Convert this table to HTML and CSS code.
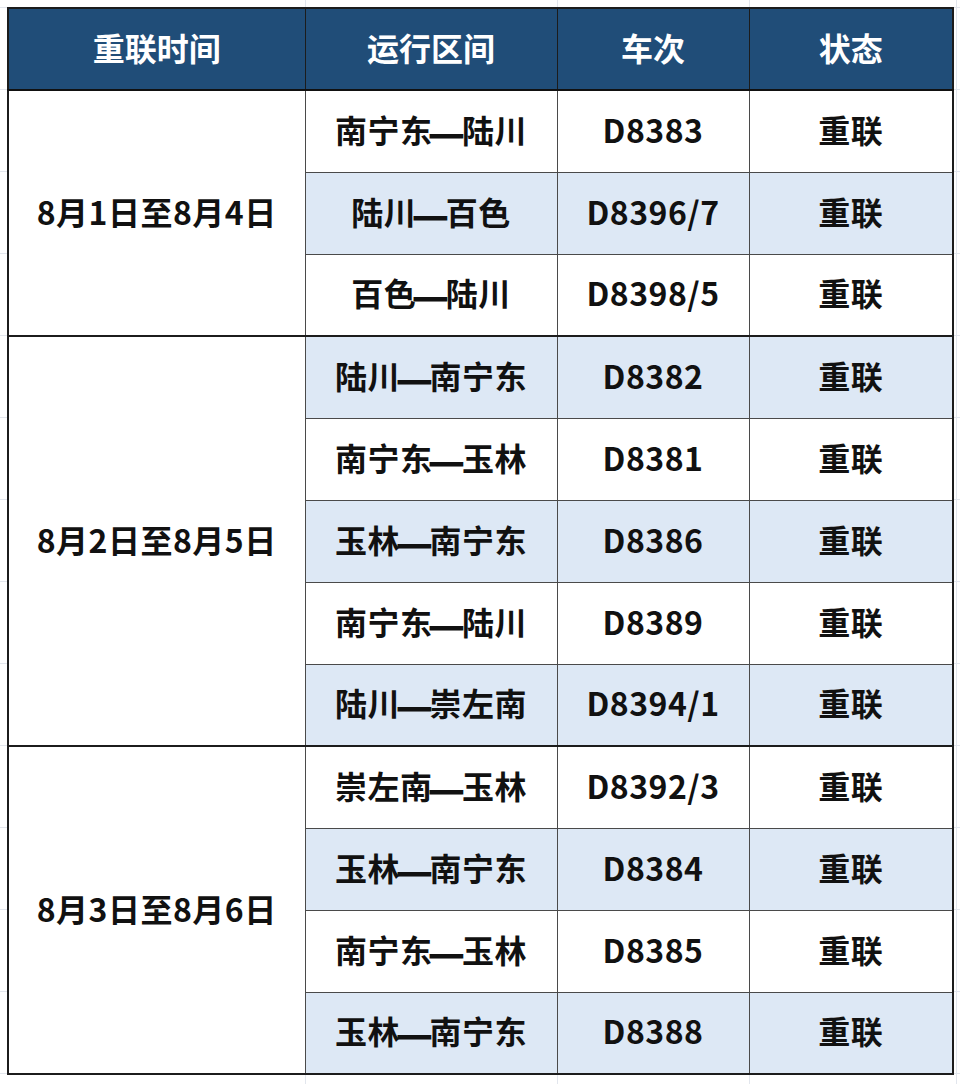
FILE: index.html
```html
<!DOCTYPE html>
<html lang="zh-CN">
<head>
<meta charset="utf-8">
<title>重联安排</title>
<link rel="stylesheet" href="styles.css">
</head>
<body>
<div class="sheet">
<table class="plan">
  <colgroup>
    <col class="c1"><col class="c2"><col class="c3"><col class="c4">
  </colgroup>
  <thead>
    <tr><th>重联时间</th><th>运行区间</th><th>车次</th><th>状态</th></tr>
  </thead>
  <tbody>
    <tr><td class="date" rowspan="3">8月1日至8月4日</td><td>南宁东<span class="dash">—</span>陆川</td><td>D8383</td><td>重联</td></tr>
    <tr class="alt"><td>陆川<span class="dash">—</span>百色</td><td>D8396/7</td><td>重联</td></tr>
    <tr><td>百色<span class="dash">—</span>陆川</td><td>D8398/5</td><td>重联</td></tr>

    <tr class="alt grp"><td class="date" rowspan="5">8月2日至8月5日</td><td>陆川<span class="dash">—</span>南宁东</td><td>D8382</td><td>重联</td></tr>
    <tr><td>南宁东<span class="dash">—</span>玉林</td><td>D8381</td><td>重联</td></tr>
    <tr class="alt"><td>玉林<span class="dash">—</span>南宁东</td><td>D8386</td><td>重联</td></tr>
    <tr><td>南宁东<span class="dash">—</span>陆川</td><td>D8389</td><td>重联</td></tr>
    <tr class="alt"><td>陆川<span class="dash">—</span>崇左南</td><td>D8394/1</td><td>重联</td></tr>

    <tr class="grp"><td class="date" rowspan="4">8月3日至8月6日</td><td>崇左南<span class="dash">—</span>玉林</td><td>D8392/3</td><td>重联</td></tr>
    <tr class="alt"><td>玉林<span class="dash">—</span>南宁东</td><td>D8384</td><td>重联</td></tr>
    <tr><td>南宁东<span class="dash">—</span>玉林</td><td>D8385</td><td>重联</td></tr>
    <tr class="alt"><td>玉林<span class="dash">—</span>南宁东</td><td>D8388</td><td>重联</td></tr>
  </tbody>
</table>
</div>
</body>
</html>
```
FILE: styles.css
```css
html, body {
  margin: 0;
  padding: 0;
  background: #ffffff;
}

.sheet {
  width: 960px;
  height: 1084px;
  box-sizing: border-box;
  padding: 7px 0 0 7px;
  background-color: #ffffff;
  background-image:
    linear-gradient(#e2e6ed, #e2e6ed),
    linear-gradient(#e2e6ed, #e2e6ed),
    linear-gradient(#e2e6ed, #e2e6ed),
    linear-gradient(#e2e6ed, #e2e6ed),
    repeating-linear-gradient(to bottom, #e2e6ed 0 1px, transparent 1px 82px);
  background-size: 1px 100%, 1px 100%, 1px 100%, 1px 100%, 100% 100%;
  background-position: 305px 0, 557px 0, 749px 0, 956px 0, 0 7px;
  background-repeat: no-repeat, no-repeat, no-repeat, no-repeat, repeat;
  font-family: "Noto Sans CJK SC", "Noto Sans", sans-serif;
  overflow: hidden;
}

.plan {
  border-collapse: collapse;
  table-layout: fixed;
  width: 945px;
  border: 2px solid #1c1c1c;
  background: #ffffff;
}

.c1 { width: 297px; }
.c2 { width: 252px; }
.c3 { width: 192px; }
.c4 { width: 204px; }

.plan th,
.plan td {
  height: 82px;
  box-sizing: border-box;
  padding: 0 0 5px 0;
  text-align: center;
  vertical-align: middle;
  font-size: 32px;
  font-weight: 700;
  line-height: 1;
  border: 1px solid #4a4a4a;
  color: #111111;
  white-space: nowrap;
}

.plan thead th {
  background: #204d78;
  color: #ffffff;
  border: 1px solid #1c1c1c;
  border-bottom: 2px solid #111111;
}

.plan tbody td {
  letter-spacing: 0.5px;
}

.dash {
  display: inline-block;
  transform: scale(1.3, 1.5);
}

.plan tr.alt td {
  background: #dde8f5;
}

.plan tr.alt td.date {
  background: #ffffff;
}

.plan tr.grp td {
  border-top: 2px solid #1c1c1c;
}

.plan td.date {
  background: #ffffff;
}
```
